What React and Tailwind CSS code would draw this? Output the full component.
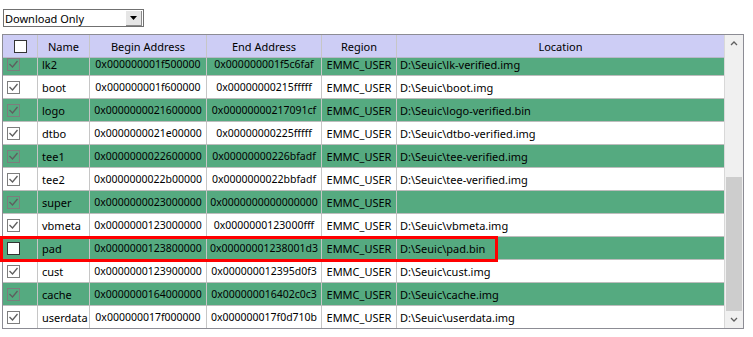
import React from "react";

const rows = [
  { name: "lk2", begin: "0x000000001f500000", end: "0x000000001f5c6faf", loc: "D:\\Seuic\\lk-verified.img", on: true },
  { name: "boot", begin: "0x000000001f600000", end: "0x00000000215fffff", loc: "D:\\Seuic\\boot.img", on: true },
  { name: "logo", begin: "0x0000000021600000", end: "0x00000000217091cf", loc: "D:\\Seuic\\logo-verified.bin", on: true },
  { name: "dtbo", begin: "0x0000000021e00000", end: "0x00000000225fffff", loc: "D:\\Seuic\\dtbo-verified.img", on: true },
  { name: "tee1", begin: "0x0000000022600000", end: "0x00000000226bfadf", loc: "D:\\Seuic\\tee-verified.img", on: true },
  { name: "tee2", begin: "0x0000000022b00000", end: "0x0000000022bbfadf", loc: "D:\\Seuic\\tee-verified.img", on: true },
  { name: "super", begin: "0x0000000023000000", end: "0x0000000000000000", loc: "", on: true },
  { name: "vbmeta", begin: "0x0000000123000000", end: "0x0000000123000fff", loc: "D:\\Seuic\\vbmeta.img", on: true },
  { name: "pad", begin: "0x0000000123800000", end: "0x00000001238001d3", loc: "D:\\Seuic\\pad.bin", on: false },
  { name: "cust", begin: "0x0000000123900000", end: "0x000000012395d0f3", loc: "D:\\Seuic\\cust.img", on: true },
  { name: "cache", begin: "0x0000000164000000", end: "0x000000016402c0c3", loc: "D:\\Seuic\\cache.img", on: true },
  { name: "userdata", begin: "0x000000017f000000", end: "0x000000017f0d710b", loc: "D:\\Seuic\\userdata.img", on: true },
];

const cols = "grid grid-cols-[35px_52px_117px_115px_75px_327px]";

const CheckBox = ({ checked }) =>
  checked ? (
    <div className="w-[13px] h-[13px] border border-[#7d7d7d]">
      <svg width="11" height="11" viewBox="0 0 11 11">
        <polyline points="1.5,5 4.5,8 9.5,2" fill="none" stroke="#5e5e5e" strokeWidth="1.3" />
      </svg>
    </div>
  ) : (
    <div className="w-[13px] h-[13px] border border-[#333] bg-white" />
  );

const Cell = ({ children, className = "" }) => (
  <div className={`border-r border-[#c6c6c6] flex items-center overflow-hidden whitespace-nowrap ${className}`}>
    {children}
  </div>
);

export default function App() {
  return (
    <div className="relative w-[753px] h-[337px] bg-white text-[11px] text-black font-['Noto_Sans',sans-serif] leading-none">
      {/* combo box */}
      <div className="pt-[9px] pl-[3px]">
        <div className="w-[141px] h-[18px] border border-[#707070] bg-white flex items-center">
          <span className="flex-1 pl-[1px] text-[11px]">Download Only</span>
          <div className="w-[16px] h-[15px] mr-[1px] bg-[#e6e6e6] border-r border-b border-[#8a8a8a] flex items-center justify-center">
            <svg width="7" height="4" viewBox="0 0 7 4">
              <polygon points="0,0 7,0 3.5,4" fill="#000" />
            </svg>
          </div>
        </div>
      </div>

      {/* list */}
      <div className="ml-[2px] mt-[7px] w-[742px] h-[295px] border border-[#8c8c94] flex">
        <div className="w-[721px] flex flex-col">
          <div className={`${cols} h-[23px] bg-[#cdcdf5] border-b border-[#b8b8c8]`}>
            <Cell className="justify-center">
              <div className="w-[13px] h-[13px] border border-[#333] bg-white" />
            </Cell>
            <Cell className="justify-center">Name</Cell>
            <Cell className="justify-center">Begin Address</Cell>
            <Cell className="justify-center">End Address</Cell>
            <Cell className="justify-center">Region</Cell>
            <Cell className="justify-center border-r-0">Location</Cell>
          </div>
          <div className="h-[270px] overflow-hidden">
            <div className="-mt-[5px]">
              {rows.map((r, i) => (
                <div
                  key={r.name}
                  className={`${cols} h-[23px] border-b border-[#bdbdbd] ${i % 2 === 0 ? "bg-[#55aa80]" : "bg-white"}`}
                >
                  <Cell className="pl-[4px]">
                    <CheckBox checked={r.on} />
                  </Cell>
                  <Cell className="pl-[4px]">{r.name}</Cell>
                  <Cell className="justify-center text-[10.5px]">{r.begin}</Cell>
                  <Cell className="justify-center text-[10.5px]">{r.end}</Cell>
                  <Cell className="justify-center">EMMC_USER</Cell>
                  <Cell className="pl-[3px] border-r-0">{r.loc}</Cell>
                </div>
              ))}
            </div>
          </div>
        </div>

        {/* scrollbar */}
        <div className="w-[19px] bg-[#f0f0f0] border-l border-[#d8d8d8] flex flex-col">
          <div className="h-[17px] flex items-center justify-center">
            <svg width="8" height="5" viewBox="0 0 8 5">
              <polyline points="1,4 4,1 7,4" fill="none" stroke="#606060" strokeWidth="1.3" />
            </svg>
          </div>
          <div className="flex-1 flex flex-col px-[1px]">
            <div className="h-[125px]" />
            <div className="flex-1 bg-[#cdcdcd]" />
          </div>
          <div className="h-[17px] flex items-center justify-center">
            <svg width="8" height="5" viewBox="0 0 8 5">
              <polyline points="1,1 4,4 7,1" fill="none" stroke="#606060" strokeWidth="1.3" />
            </svg>
          </div>
        </div>
      </div>

      {/* highlight around selected row */}
      <div className="absolute left-0 top-[236px] w-[498px] h-[26px] border-[3px] border-[#ff0000]" />
    </div>
  );
}
